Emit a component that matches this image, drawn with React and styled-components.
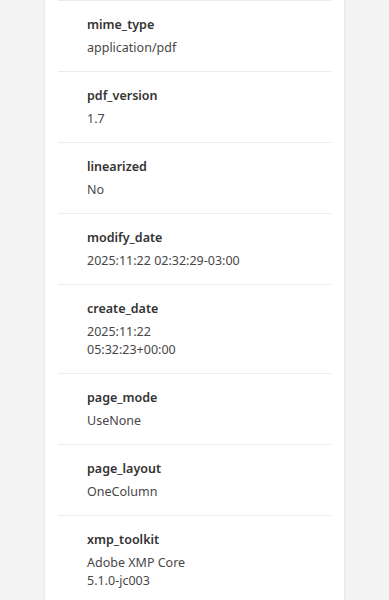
import React from "react";
import styled, { createGlobalStyle } from "styled-components";

const GlobalStyle = createGlobalStyle`
    html, body {
        margin: 0;
        padding: 0;
        background: #f4f4f4;
        font-family: "Noto Sans", "Open Sans", sans-serif;
    }
`;

const fields = [
    { name: "mime_type", value: "application/pdf" },
    { name: "pdf_version", value: "1.7" },
    { name: "linearized", value: "No" },
    { name: "modify_date", value: "2025:11:22 02:32:29-03:00" },
    { name: "create_date", value: "2025:11:22\n05:32:23+00:00" },
    { name: "page_mode", value: "UseNone" },
    { name: "page_layout", value: "OneColumn" },
    { name: "xmp_toolkit", value: "Adobe XMP Core\n5.1.0-jc003" },
];

function App() {
    return (
        <>
            <GlobalStyle />
            <Page>
                <Card>
                    {fields.map((f) => (
                        <Row key={f.name}>
                            <Label>{f.name}</Label>
                            <Value>
                                {f.value.split("\n").map((line) => (
                                    <span key={line}>{line}</span>
                                ))}
                            </Value>
                        </Row>
                    ))}
                </Card>
            </Page>
        </>
    );
}

export default App;

const Page = styled.div`
    width: 389px;
    height: 600px;
    overflow: hidden;
    display: flex;
    justify-content: flex-start;
    padding-left: 44px;
    box-sizing: border-box;
`;
const Card = styled.div`
    width: 301px;
    background: #fff;
    border-left: 1px solid #e8e8e8;
    border-right: 1px solid #e8e8e8;
    box-shadow: 0 0 2px rgba(0, 0, 0, 0.04);
    box-sizing: border-box;
    padding: 0 13px;
    min-height: 600px;
`;
const Row = styled.div`
    border-top: 1px solid #ececec;
    padding: 15px 29px 14px;
    display: flex;
    flex-direction: column;
    gap: 5px;
`;
const Label = styled.div`
    font-size: 12.5px;
    line-height: 18px;
    font-weight: 600;
    color: #333;
`;
const Value = styled.div`
    font-size: 12.5px;
    line-height: 18px;
    color: #474747;
    display: flex;
    flex-direction: column;
`;
